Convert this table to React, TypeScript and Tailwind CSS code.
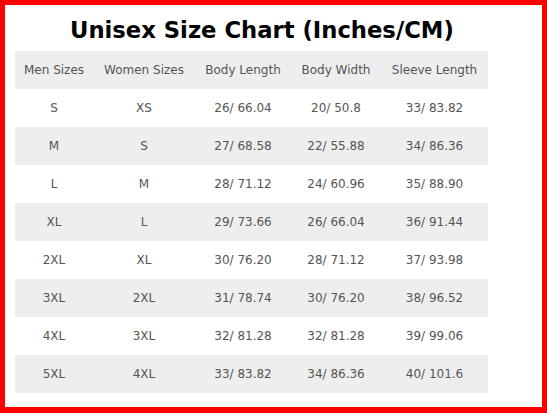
import React from "react";

const headers = ["Men Sizes", "Women Sizes", "Body Length", "Body Width", "Sleeve Length"];
const rows = [
  ["S", "XS", "26/ 66.04", "20/ 50.8", "33/ 83.82"],
  ["M", "S", "27/ 68.58", "22/ 55.88", "34/ 86.36"],
  ["L", "M", "28/ 71.12", "24/ 60.96", "35/ 88.90"],
  ["XL", "L", "29/ 73.66", "26/ 66.04", "36/ 91.44"],
  ["2XL", "XL", "30/ 76.20", "28/ 71.12", "37/ 93.98"],
  ["3XL", "2XL", "31/ 78.74", "30/ 76.20", "38/ 96.52"],
  ["4XL", "3XL", "32/ 81.28", "32/ 81.28", "39/ 99.06"],
  ["5XL", "4XL", "33/ 83.82", "34/ 86.36", "40/ 101.6"],
];
const widths = ["w-[78px]", "w-[102px]", "w-[96px]", "w-[90px]", "w-[107px]"];

export default function App() {
  return (
    <div className="w-[547px] h-[413px] bg-[#ff0000] pt-[5px] pl-[5px] pr-[5px] pb-[6px]" style={{ fontFamily: '"DejaVu Sans", Verdana, sans-serif' }}>
      <div className="w-full h-full bg-white pl-[10px]">
        <div className="h-[46px] flex items-center pl-[55px] pt-[4px]">
          <h1 className="text-[22.7px] font-bold text-black leading-none">Unisex Size Chart (Inches/CM)</h1>
        </div>
        <table className="border-collapse table-fixed w-[473px] text-[12px] text-[#555]">
          <thead>
            <tr className="bg-[#eeeeee] h-[38px]">
              {headers.map((h, i) => (
                <th key={h} className={`${widths[i]} font-normal text-center p-0`}>{h}</th>
              ))}
            </tr>
          </thead>
          <tbody>
            {rows.map((r, ri) => (
              <tr key={ri} className={`${ri % 2 === 1 ? "bg-[#eeeeee]" : "bg-white"} h-[38px]`}>
                {r.map((c, ci) => (
                  <td key={ci} className="text-center p-0">{c}</td>
                ))}
              </tr>
            ))}
          </tbody>
        </table>
      </div>
    </div>
  );
}
